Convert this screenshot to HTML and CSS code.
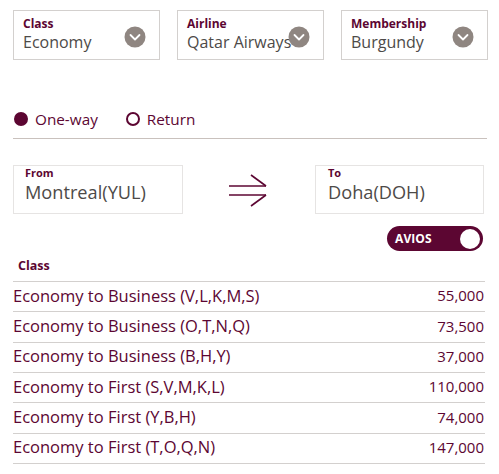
FILE: index.html
```html
<!DOCTYPE html>
<html lang="en">
<head>
<meta charset="utf-8">
<title>Avios calculator</title>
<link rel="stylesheet" href="styles.css">
</head>
<body>
<div class="page">
  <div class="selects">
    <div class="select">
      <div class="label">Class</div>
      <div class="value">Economy</div>
      <svg class="chev" width="22" height="22" viewBox="0 0 22 22"><circle cx="11" cy="11" r="10.5" fill="#8f8681"/><polyline points="6.5,9 11,13.5 15.5,9" fill="none" stroke="#fff" stroke-width="1.8" stroke-linecap="round" stroke-linejoin="round"/></svg>
    </div>
    <div class="select">
      <div class="label">Airline</div>
      <div class="value">Qatar Airways</div>
      <svg class="chev" width="22" height="22" viewBox="0 0 22 22"><circle cx="11" cy="11" r="10.5" fill="#8f8681"/><polyline points="6.5,9 11,13.5 15.5,9" fill="none" stroke="#fff" stroke-width="1.8" stroke-linecap="round" stroke-linejoin="round"/></svg>
    </div>
    <div class="select">
      <div class="label">Membership</div>
      <div class="value">Burgundy</div>
      <svg class="chev" width="22" height="22" viewBox="0 0 22 22"><circle cx="11" cy="11" r="10.5" fill="#8f8681"/><polyline points="6.5,9 11,13.5 15.5,9" fill="none" stroke="#fff" stroke-width="1.8" stroke-linecap="round" stroke-linejoin="round"/></svg>
    </div>
  </div>

  <div class="trip">
    <div class="radio"><span class="dot on"></span>One-way</div>
    <div class="radio"><span class="dot"></span>Return</div>
  </div>

  <div class="route">
    <div class="place">
      <div class="plabel">From</div>
      <div class="pvalue">Montreal(YUL)</div>
    </div>
    <div class="arrow">
      <svg width="40" height="34" viewBox="0 0 40 34"><g fill="none" stroke="#5c0632" stroke-width="1.6"><line x1="2" y1="13" x2="39" y2="13"/><line x1="2" y1="22" x2="39" y2="22"/><line x1="24" y1="2" x2="39" y2="13"/><line x1="39" y1="22" x2="24" y2="33"/></g></svg>
    </div>
    <div class="place to">
      <div class="plabel">To</div>
      <div class="pvalue">Doha(DOH)</div>
    </div>
  </div>

  <div class="toggle-row">
    <div class="toggle"><span class="tlabel">AVIOS</span><span class="knob"></span></div>
  </div>

  <div class="thead">Class</div>
  <div class="table">
    <div class="row"><span>Economy to Business (V,L,K,M,S)</span><span class="num">55,000</span></div>
    <div class="row"><span>Economy to Business (O,T,N,Q)</span><span class="num">73,500</span></div>
    <div class="row"><span>Economy to Business (B,H,Y)</span><span class="num">37,000</span></div>
    <div class="row"><span>Economy to First (S,V,M,K,L)</span><span class="num">110,000</span></div>
    <div class="row"><span>Economy to First (Y,B,H)</span><span class="num">74,000</span></div>
    <div class="row"><span>Economy to First (T,O,Q,N)</span><span class="num">147,000</span></div>
  </div>
</div>
</body>
</html>
```
FILE: styles.css
```css
* { box-sizing: border-box; }
html, body { margin: 0; padding: 0; background: #fff; }
body {
  font-family: "Open Sans", "Liberation Sans", sans-serif;
  color: #5c0632;
}
.page {
  padding: 10px 11px 0 13px;
}
.selects {
  display: grid;
  grid-template-columns: 1fr 1fr 1fr;
  gap: 17px;
}
.select {
  position: relative;
  height: 50px;
  border: 1px solid #d3d0ce;
  padding: 4px 8px 0 9px;
}
.label {
  font-size: 12px;
  font-weight: 700;
  line-height: 17px;
  color: #5c0632;
}
.value {
  font-size: 16px;
  line-height: 20px;
  color: #4d4a48;
  white-space: nowrap;
}
.chev {
  position: absolute;
  right: 13px;
  top: 15px;
}
.trip {
  display: flex;
  gap: 28px;
  margin-top: 48px;
  padding: 0 0 8px 1px;
  border-bottom: 1px solid #c9c1bd;
  margin-right: 1px;
}
.radio {
  display: flex;
  align-items: center;
  gap: 7px;
  font-size: 15.3px;
  line-height: 22px;
  color: #5c0632;
}
.dot {
  width: 14px;
  height: 14px;
  border-radius: 50%;
  border: 2px solid #5c0632;
}
.dot.on { background: #5c0632; }
.route {
  display: grid;
  grid-template-columns: 170px 1fr 169px;
  margin-top: 26px;
  margin-right: 4px;
  height: 49px;
}
.place {
  border: 1px solid #e6e4e3;
  padding: 1px 10px 0 11px;
}
.place.to { padding-left: 12px; }
.plabel {
  font-size: 11px;
  font-weight: 700;
  line-height: 11px;
}
.pvalue {
  font-size: 18.2px;
  line-height: 25px;
  margin-top: 2px;
  color: #4d4a48;
}
.arrow {
  display: flex;
  justify-content: center;
  align-items: center;
  padding-right: 5px;
}
.toggle-row {
  display: flex;
  justify-content: flex-end;
  margin-top: 12px;
  margin-right: 5px;
}
.toggle {
  position: relative;
  width: 96px;
  height: 25px;
  border-radius: 13px;
  background: #5c0632;
  display: flex;
  align-items: center;
  padding-left: 8px;
}
.tlabel {
  color: #fff;
  font-size: 12px;
  font-weight: 700;
  letter-spacing: 0.1px;
}
.knob {
  position: absolute;
  right: 3px;
  top: 2.5px;
  width: 20px;
  height: 20px;
  border-radius: 50%;
  background: #fff;
}
.thead {
  font-size: 12.5px;
  font-weight: 700;
  line-height: 16px;
  padding-left: 5px;
  height: 30px;
  padding-top: 7px;
}
.table {
  margin-right: 3px;
  border-top: 1px solid #d3d0ce;
}
.row {
  display: flex;
  justify-content: space-between;
  align-items: center;
  height: 30.35px;
  border-bottom: 1px solid #d3d0ce;
  font-size: 16.5px;
  padding-bottom: 3px;
  color: #5c0632;
}
.num {
  font-size: 15px;
  padding-right: 1px;
}
```
